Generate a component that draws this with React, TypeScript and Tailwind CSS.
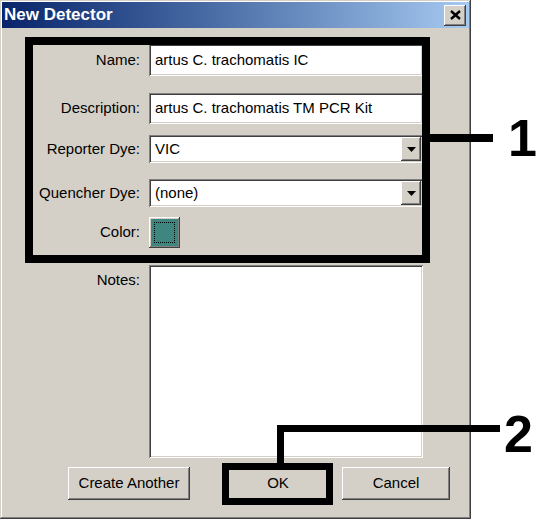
const font = { fontFamily: '"Liberation Sans", Arial, sans-serif' };

const raised =
  'shadow-[inset_-1px_-1px_#404040,inset_1px_1px_#ffffff,inset_-2px_-2px_#808080,inset_2px_2px_#d4d0c8]';
const sunken =
  'shadow-[inset_1px_1px_#808080,inset_-1px_-1px_#ffffff,inset_2px_2px_#404040,inset_-2px_-2px_#d4d0c8]';

function Label({ children, top }: { children: string; top?: boolean }) {
  return (
    <div
      className={`w-[147px] pr-[9px] text-right text-[15px] text-black flex justify-end ${
        top ? 'items-start pt-[4px]' : 'items-center'
      }`}
    >
      {children}
    </div>
  );
}

function TextField({ value, h }: { value: string; h: string }) {
  return (
    <div className={`w-[274px] ${h} bg-white ${sunken} flex items-center pl-[6px] text-[15px] text-black`}>
      {value}
    </div>
  );
}

function Select({ value }: { value: string }) {
  return (
    <div className={`w-[274px] h-[28px] bg-white ${sunken} flex items-center justify-between p-[2px] pl-[6px] text-[15px] text-black`}>
      <span>{value}</span>
      <div className={`w-[20px] h-full bg-[#d4d0c8] ${raised} flex items-center justify-center`}>
        <svg width="9" height="5" viewBox="0 0 9 5">
          <path d="M0 0h9L4.5 5z" fill="#000" />
        </svg>
      </div>
    </div>
  );
}

function Button({ children, w }: { children: string; w: string }) {
  return (
    <div className={`${w} h-[33px] bg-[#d4d0c8] ${raised} flex items-center justify-center text-[15px] text-black`}>
      {children}
    </div>
  );
}

export default function App() {
  return (
    <div className="relative w-[541px] h-[523px] bg-white overflow-hidden" style={font}>
      {/* dialog */}
      <div
        className={`w-[471px] h-[519px] bg-[#d4d0c8] p-[2px] shadow-[inset_-1px_-1px_#404040,inset_1px_1px_#d4d0c8,inset_-2px_-2px_#808080,inset_2px_2px_#ffffff]`}
      >
        <div className="h-[26px] flex items-center justify-between bg-gradient-to-r from-[#0a246a] to-[#a6caf0] pl-[2px] pr-[3px]">
          <span className="text-white font-bold text-[17px]">New Detector</span>
          <div className={`w-[22px] h-[21px] bg-[#d4d0c8] ${raised} flex items-center justify-center`}>
            <svg width="11" height="10" viewBox="0 0 11 10">
              <path d="M1 1L10 9M10 1L1 9" stroke="#000" strokeWidth="2.4" />
            </svg>
          </div>
        </div>

        <div className="flex flex-col">
          <div className="flex mt-[16px] h-[32px]">
            <Label>Name:</Label>
            <TextField value="artus C. trachomatis IC" h="h-[32px]" />
          </div>
          <div className="flex mt-[17px] h-[31px]">
            <Label>Description:</Label>
            <TextField value="artus C. trachomatis TM PCR Kit" h="h-[31px]" />
          </div>
          <div className="flex mt-[11px] h-[28px]">
            <Label>Reporter Dye:</Label>
            <Select value="VIC" />
          </div>
          <div className="flex mt-[16px] h-[28px]">
            <Label>Quencher Dye:</Label>
            <Select value="(none)" />
          </div>
          <div className="flex mt-[10px] h-[31px]">
            <Label>Color:</Label>
            <div className={`w-[31px] h-[31px] bg-[#3f8580] ${raised} p-[5px]`}>
              <div className="w-full h-full border border-dotted border-black" />
            </div>
          </div>
          <div className="flex mt-[17px] h-[193px]">
            <Label top>Notes:</Label>
            <div className={`w-[274px] h-[193px] bg-white ${sunken}`} />
          </div>
          <div className="flex mt-[9px] pl-[66px]">
            <Button w="w-[122px]">Create Another</Button>
            <div className="ml-[34px]">
              <Button w="w-[108px]">OK</Button>
            </div>
            <div className="ml-[10px]">
              <Button w="w-[108px]">Cancel</Button>
            </div>
          </div>
        </div>
      </div>

      {/* annotation 1 */}
      <div className="absolute left-[25px] top-[37px] w-[405px] h-[226px] border-[8px] border-black" />
      <div className="absolute left-[430px] top-[134px] w-[63px] h-[8px] bg-black" />
      <div className="absolute left-[508px] top-[112px] text-[52px] font-bold leading-none text-black">1</div>

      {/* annotation 2 */}
      <div className="absolute left-[222px] top-[463px] w-[111px] h-[42px] border-[7px] border-black" />
      <div className="absolute left-[277px] top-[425px] w-[7px] h-[38px] bg-black" />
      <div className="absolute left-[277px] top-[425px] w-[223px] h-[7px] bg-black" />
      <div className="absolute left-[504px] top-[408px] text-[52px] font-bold leading-none text-black">2</div>
    </div>
  );
}
